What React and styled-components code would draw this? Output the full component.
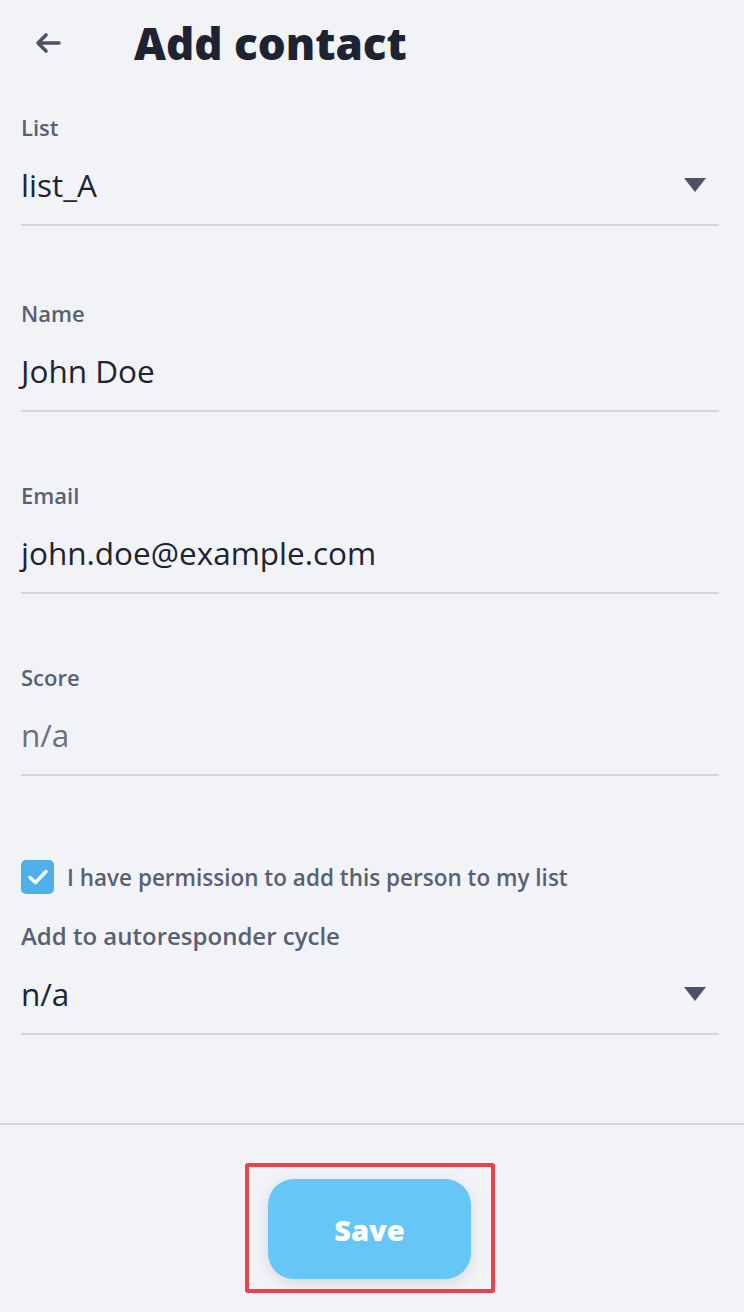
import styled, { createGlobalStyle } from "styled-components";

const GlobalStyle = createGlobalStyle`
  * { box-sizing: border-box; }
  body {
    margin: 0;
    background: #f2f3f7;
    font-family: "Open Sans", "Noto Sans", sans-serif;
  }
`;

const StPage = styled.div`
  height: 100vh;
  display: flex;
  flex-direction: column;
`;

const StHeader = styled.header`
  height: 86px;
  display: flex;
  align-items: center;
  padding-left: 33px;
  gap: 72px;
`;

const StBack = styled.button`
  border: none;
  background: none;
  padding: 0;
  width: 29px;
  height: 29px;
  color: #4b5364;
  display: flex;
  align-items: center;
  justify-content: center;
`;

const StTitle = styled.h1`
  margin: 0;
  font-size: 44px;
  font-weight: 800;
  color: #1d2330;
`;

const StForm = styled.main`
  flex: 1;
  padding: 26px 25px 0 21px;
  display: flex;
  flex-direction: column;
`;

const StField = styled.div`
  display: flex;
  flex-direction: column;
  border-bottom: 2px solid #d4d6dc;
  padding-bottom: 19px;
  margin-bottom: ${(p) => p.$gap}px;
`;

const StLabel = styled.label`
  font-size: ${(p) => (p.$large ? 24 : 22)}px;
  line-height: 30px;
  font-weight: 600;
  color: #586174;
`;

const StValueRow = styled.div`
  margin-top: 23px;
  height: 40px;
  display: flex;
  align-items: center;
  justify-content: space-between;
  padding-right: 13px;
`;

const StValue = styled.span`
  font-size: 31.5px;
  line-height: 40px;
  font-weight: 500;
  color: ${(p) => (p.$muted ? "#6b717c" : "#1e2430")};
`;

const StCaret = styled.span`
  width: 0;
  height: 0;
  border-left: 11px solid transparent;
  border-right: 11px solid transparent;
  border-top: 14px solid #4a5263;
`;

const StCheckRow = styled.div`
  display: flex;
  align-items: center;
  gap: 13px;
  height: 34px;
  margin-bottom: 27px;
`;

const StCheckbox = styled.span`
  width: 33px;
  height: 34px;
  border-radius: 5px;
  background: #4fb0ea;
  display: flex;
  align-items: center;
  justify-content: center;
`;

const StCheckText = styled.span`
  font-size: 22.5px;
  font-weight: 600;
  color: #586174;
`;

const StFooter = styled.footer`
  border-top: 2px solid #d4d6dc;
  height: 189px;
  display: flex;
  justify-content: center;
  padding: 54px 5px 0 0;
`;

const StButtonWrap = styled.div`
  position: relative;
  width: 203px;
  height: 100px;
`;

const StSave = styled.button`
  width: 100%;
  height: 100%;
  border: none;
  border-radius: 26px;
  background: #66c7f6;
  color: #ffffff;
  font-family: inherit;
  font-size: 29px;
  font-weight: 800;
  box-shadow: 0 4px 14px rgba(60, 70, 90, 0.15);
`;

const StHighlight = styled.span`
  position: absolute;
  top: -16px;
  bottom: -14px;
  left: -23px;
  right: -24px;
  border: 4px solid #e6434c;
  border-radius: 3px;
  pointer-events: none;
`;

const Field = ({ label, value, muted, select, gap, large }) => (
  <StField $gap={gap}>
    <StLabel $large={large}>{label}</StLabel>
    <StValueRow>
      <StValue $muted={muted}>{value}</StValue>
      {select && <StCaret />}
    </StValueRow>
  </StField>
);

const App = () => {
  return (
    <>
      <GlobalStyle />
      <StPage>
        <StHeader>
          <StBack aria-label="Back">
            <svg width="26" height="22" viewBox="0 0 26 22" fill="none">
              <path
                d="M24 11H3M11 3L3 11l8 8"
                stroke="currentColor"
                strokeWidth="3.6"
                strokeLinecap="round"
                strokeLinejoin="round"
              />
            </svg>
          </StBack>
          <StTitle>Add contact</StTitle>
        </StHeader>
        <StForm>
          <Field label="List" value="list_A" select gap={72} />
          <Field label="Name" value="John Doe" gap={68} />
          <Field label="Email" value="john.doe@example.com" gap={68} />
          <Field label="Score" value="n/a" muted gap={84} />
          <StCheckRow>
            <StCheckbox>
              <svg width="22" height="18" viewBox="0 0 22 18" fill="none">
                <path
                  d="M3 9.5l5.5 5L19 3.5"
                  stroke="#ffffff"
                  strokeWidth="3.4"
                  strokeLinecap="round"
                  strokeLinejoin="round"
                />
              </svg>
            </StCheckbox>
            <StCheckText>I have permission to add this person to my list</StCheckText>
          </StCheckRow>
          <Field label="Add to autoresponder cycle" large value="n/a" select gap={0} />
        </StForm>
        <StFooter>
          <StButtonWrap>
            <StSave>Save</StSave>
            <StHighlight />
          </StButtonWrap>
        </StFooter>
      </StPage>
    </>
  );
};

export default App;
